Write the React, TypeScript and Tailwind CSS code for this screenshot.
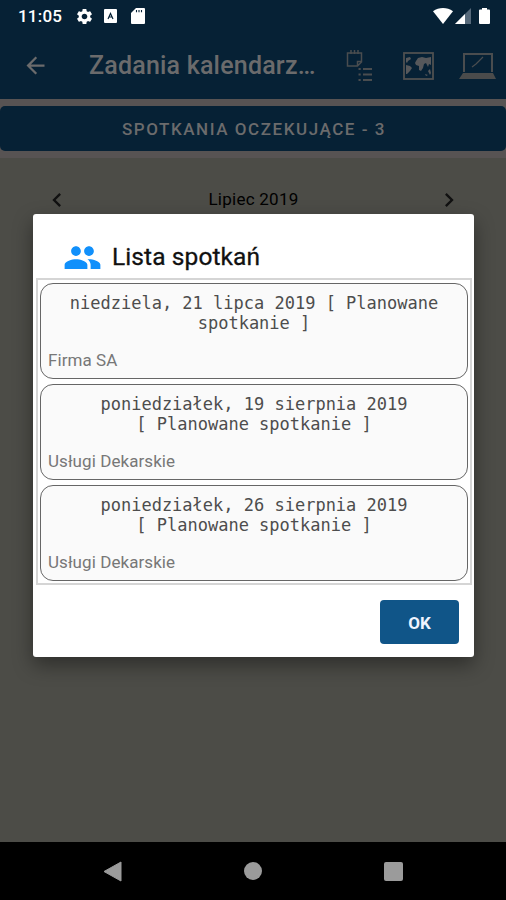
import { MdArrowBack, MdChevronLeft, MdChevronRight, MdPeople, MdSettings } from "react-icons/md";

const meetings = [
    { id: 1, title: ["niedziela, 21 lipca 2019 [ Planowane", "spotkanie ]"], company: "Firma SA" },
    { id: 2, title: ["poniedziałek, 19 sierpnia 2019", "[ Planowane spotkanie ]"], company: "Usługi Dekarskie" },
    { id: 3, title: ["poniedziałek, 26 sierpnia 2019", "[ Planowane spotkanie ]"], company: "Usługi Dekarskie" },
];

function StatusBar() {
    return (
        <div className="flex h-8 items-center justify-between pl-[18px] pr-4 text-white">
            <div className="flex items-center">
                <span className="w-[57px] text-[17px] font-medium leading-none tracking-[0.2px]">11:05</span>
                <MdSettings className="h-[19px] w-[19px]" />
                <svg className="ml-[10px] h-[14px] w-[13px]" viewBox="0 0 13 14">
                    <rect width="13" height="14" rx="1" fill="#fff" />
                    <path d="M4 10 6.500 4.500 9 10M5 8h3" fill="none" stroke="#062135" strokeWidth="1.2" />
                </svg>
                <svg className="ml-[14px] h-4 w-[14px]" viewBox="0 0 14 16">
                    <path d="M5 0h8a1 1 0 0 1 1 1v14a1 1 0 0 1-1 1H1a1 1 0 0 1-1-1V5z" fill="#fff" />
                    <path d="M5.500 2v2.200M8 2v2.200M10.500 2v2.200" stroke="#062135" strokeWidth="1.1" />
                </svg>
            </div>
            <div className="flex items-center">
                <svg className="h-4 w-5" viewBox="0 0 20 16">
                    <path d="M0 3.200C6-1 14-1 20 3.200L10 16z" fill="#fff" />
                </svg>
                <svg className="ml-[2px] h-4 w-4" viewBox="0 0 16 16">
                    <path d="M16 0v16H0z" fill="#56697a" />
                    <path d="M10 6v10H0z" fill="#fff" />
                </svg>
                <svg className="ml-2 h-4 w-[11px]" viewBox="0 0 11 16">
                    <path d="M3 0h5v1.600h2a1 1 0 0 1 1 1V15a1 1 0 0 1-1 1H1a1 1 0 0 1-1-1V2.600a1 1 0 0 1 1-1h2z" fill="#fff" />
                </svg>
            </div>
        </div>
    );
}

function AppBar() {
    return (
        <div className="flex h-[67px] items-center pl-[22px] pr-[10px] text-[#6b6b6c]">
            <MdArrowBack className="h-[27px] w-[27px]" />
            <h1 className="ml-10 w-[257px] whitespace-nowrap text-[25px] font-medium tracking-[0.2px]">Zadania kalendarz…</h1>
            <svg className="h-[34px] w-[27px]" viewBox="0 0 27 34" fill="none" stroke="#4a4d4f">
                <path d="M1.500 4h14v9l-4 4h-10zM15.500 12.500h-4V17M5 1v4M8.500 1v4M12 1v4" strokeWidth="1.5" />
                <path d="M17 20h9M17 25.500h9M17 31h9" strokeWidth="2" />
                <path d="M12.500 20h2.200M12.500 25.500h2.200M12.500 31h2.200" strokeWidth="2" />
            </svg>
            <svg className="ml-[30px] h-7 w-[31px]" viewBox="0 0 31 28">
                <rect x="1" y="1" width="29" height="26" fill="none" stroke="#4f5050" strokeWidth="1.8" />
                <path d="M3 6l4-1 1 2-3 2-1 2-1-1zM3 13l4 1 2 2-2 3-3 3H3zM13 9l2-3 4-1 4 1 5-1v8l-2-1-1 3-2-4-2 1-1 4-2 3-2-1v-4l-3-1-1-2zM25 19l2-2 1 4-1 2zM22 22l3 1-2 1z" fill="#56585b" />
            </svg>
            <svg className="ml-[25px] h-7 w-[37px]" viewBox="0 0 37 28">
                <path d="M5 20V2h28v18" fill="none" stroke="#4a4d4f" strokeWidth="2" />
                <path d="M4 21h30l3 6H0z" fill="#4a4b4b" />
                <path d="M13 15l4-3 2-2 5-5" stroke="#4a4d4f" strokeWidth="1.2" fill="none" />
            </svg>
        </div>
    );
}

function NavBar() {
    return (
        <div className="flex h-[58px] items-center justify-between bg-black px-[103px]">
            <svg className="h-[21px] w-[19px]" viewBox="0 0 19 21">
                <path d="M18 1v19L1 10.500z" fill="#9b9b9b" stroke="#9b9b9b" strokeLinejoin="round" />
            </svg>
            <span className="h-[18px] w-[18px] rounded-full bg-[#9b9b9b]" />
            <span className="h-[19px] w-[19px] rounded-[2px] bg-[#9b9b9b]" />
        </div>
    );
}

function MeetingsDialog() {
    return (
        <div className="absolute left-[33px] top-[214px] flex h-[443px] w-[441px] flex-col rounded-[3px] bg-white shadow-[0_8px_20px_rgba(0,0,0,0.4)]">
            <div className="flex h-16 items-center pl-[30px] pt-[22px]">
                <MdPeople className="h-[39px] w-[39px] text-[#1190fb]" />
                <h2 className="ml-[10px] pt-px text-[24.5px] tracking-[0.1px] text-[#111] [-webkit-text-stroke:0.3px_#111]">Lista spotkań</h2>
            </div>
            <div className="ml-[3px] flex h-[307px] w-[436px] flex-col gap-[5px] border-2 border-[#d5d5d5] px-[2px] pt-[3px]">
                {meetings.map((meeting) => (
                    <div key={meeting.id} className="flex h-[96px] shrink-0 flex-col justify-between rounded-[13px] border border-[#666] bg-[#fafafa] px-[7px] pb-[6px] pt-[9px]">
                        <p className="text-center font-['DejaVu_Sans_Mono',monospace] text-[17px] leading-5 text-[#4d4d4d]">
                            {meeting.title[0]}
                            <br />
                            {meeting.title[1]}
                        </p>
                        <p className="text-[17px] leading-6 tracking-[0.07px] text-[#777]">{meeting.company}</p>
                    </div>
                ))}
            </div>
            <div className="flex justify-end pr-[15px] pt-[15px]">
                <button className="h-[44px] w-[79px] rounded-[4px] bg-[#105588] pt-[3px] text-[17px] font-bold text-[#eef4ff]">OK</button>
            </div>
        </div>
    );
}

export default function App() {
    return (
        <div className="relative flex h-[900px] w-[506px] flex-col overflow-hidden bg-[#4c4c47] font-[Roboto,sans-serif]">
            <header className="bg-[#062135]">
                <StatusBar />
                <AppBar />
            </header>
            <div className="h-[59px] bg-[#575353] pt-[7px]">
                <button className="h-[45px] w-full rounded-[5px] bg-[#062135] pl-[2px] pt-[2px] text-[17px] font-medium tracking-[1.55px] text-[#6b6b6c]">
                    SPOTKANIA OCZEKUJĄCE - 3
                </button>
            </div>
            <main className="flex-1">
                <div className="flex items-center justify-between px-[43px] pt-7 text-[#111]">
                    <MdChevronLeft className="h-7 w-7" />
                    <span className="pl-px text-[17px] tracking-[0.25px] text-black">Lipiec 2019</span>
                    <MdChevronRight className="h-7 w-7" />
                </div>
            </main>
            <NavBar />
            <MeetingsDialog />
        </div>
    );
}
